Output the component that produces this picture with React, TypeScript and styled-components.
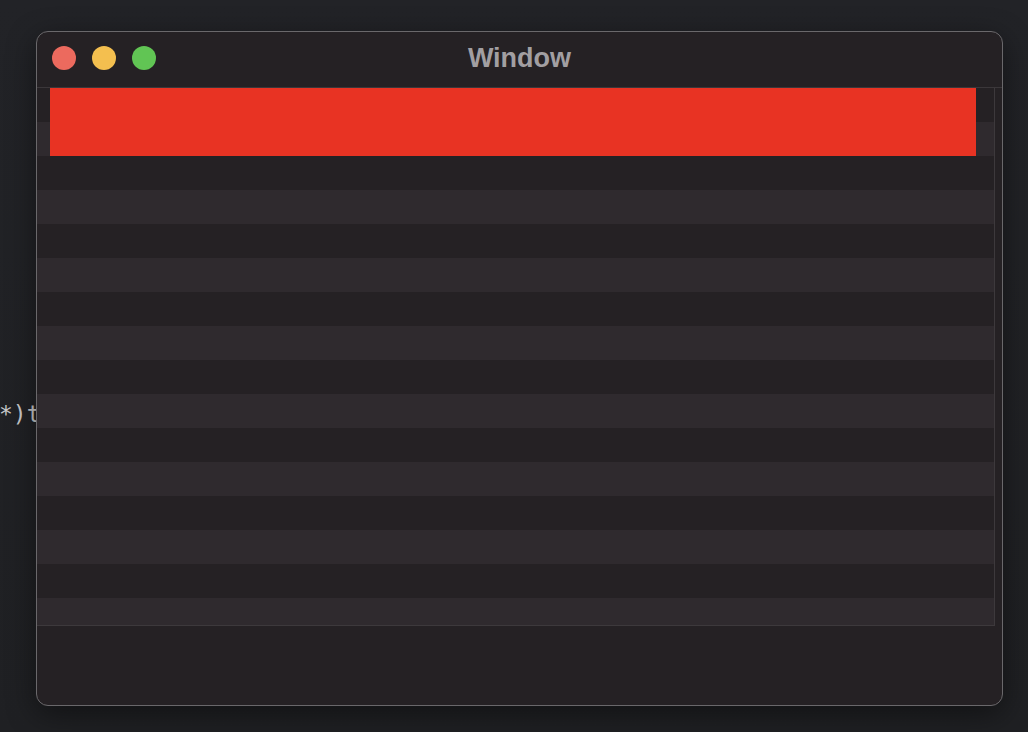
import React, { FC } from "react";
import styled, { createGlobalStyle } from "styled-components";

const GlobalStyle = createGlobalStyle`
	html, body {
		margin: 0;
		padding: 0;
		background: #202125;
		font-family: "Liberation Sans", Arial, sans-serif;
	}
`;

const Desktop = styled.div`
	position: relative;
	width: 1028px;
	height: 732px;
	overflow: hidden;
	padding: 31px 0 0 36px;
	box-sizing: border-box;
	background: linear-gradient(180deg, #222327 0%, #1f2023 100%);
`;

const EditorText = styled.pre`
	position: absolute;
	left: -1px;
	top: 401px;
	margin: 0;
	font-family: "DejaVu Sans Mono", "Liberation Mono", monospace;
	font-size: 23px;
	color: #c8c8c9;
`;

const Window = styled.div`
	position: relative;
	width: 967px;
	height: 675px;
	box-sizing: border-box;
	border: 1px solid #6a686b;
	border-radius: 12px;
	background: #252124;
	overflow: hidden;
	box-shadow: 0 8px 30px rgba(0, 0, 0, 0.45);
`;

const TitleBar = styled.div`
	position: relative;
	display: flex;
	align-items: center;
	gap: 16px;
	height: 56px;
	padding: 0 0 4px 15px;
	box-sizing: border-box;
	border-bottom: 1px solid #3b373a;
`;

const Light = styled.span<{ $color: string }>`
	width: 24px;
	height: 24px;
	border-radius: 50%;
	background: ${(p) => p.$color};
`;

const Title = styled.div`
	position: absolute;
	inset: 0 0 2px 0;
	display: flex;
	align-items: center;
	justify-content: center;
	font-size: 27px;
	font-weight: 700;
	color: #a29fa2;
	pointer-events: none;
`;

const Table = styled.div`
	position: relative;
	display: flex;
	flex-direction: column;
	width: 958px;
	height: 538px;
	box-sizing: border-box;
	border-right: 1px solid #3d393c;
	border-bottom: 1px solid #3d393c;
	overflow: hidden;
`;

const Row = styled.div<{ $odd: boolean }>`
	flex: none;
	height: 34px;
	background: ${(p) => (p.$odd ? "#2f2a2e" : "#252124")};
`;

const Selection = styled.div`
	position: absolute;
	left: 13px;
	top: 0;
	width: 926px;
	height: 68px;
	background: #e83323;
`;

const App: FC = () => {
	const rows = Array.from({ length: 16 }, (_, i) => i);
	return (
		<>
			<GlobalStyle />
			<Desktop>
				<EditorText>*)t</EditorText>
				<Window>
					<TitleBar>
						<Light $color="#ec6a5e" />
						<Light $color="#f4bf4f" />
						<Light $color="#61c554" />
						<Title>Window</Title>
					</TitleBar>
					<Table>
						{rows.map((i) => (
							<Row key={i} $odd={i % 2 === 1} />
						))}
						<Selection />
					</Table>
				</Window>
			</Desktop>
		</>
	);
};

export default App;
